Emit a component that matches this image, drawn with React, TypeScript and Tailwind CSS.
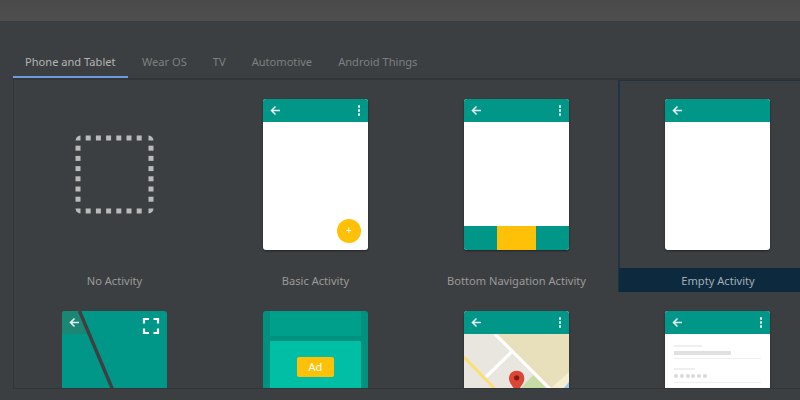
const TEAL = 'bg-[#009688]'

function Arrow({ className = '' }: { className?: string }) {
  return (
    <svg width="11" height="11" viewBox="0 0 11 11" className={className}>
      <path d="M10 5.5H2M5.5 1.5L1.5 5.5L5.5 9.5" fill="none" stroke="#e4f3f1" strokeWidth="1.6" />
    </svg>
  )
}

function Dots() {
  return (
    <div className="flex flex-col gap-[1.5px]">
      <span className="w-[2.5px] h-[2.5px] rounded-full bg-[#e8f5f3]" />
      <span className="w-[2.5px] h-[2.5px] rounded-full bg-[#e8f5f3]" />
      <span className="w-[2.5px] h-[2.5px] rounded-full bg-[#e8f5f3]" />
    </div>
  )
}

function AppBar({ dots = true }: { dots?: boolean }) {
  return (
    <div className={`h-[23px] shrink-0 ${TEAL} flex items-center justify-between pl-[7px] pr-[8px]`}>
      <Arrow />
      {dots && <Dots />}
    </div>
  )
}

function Phone({ children }: { children: React.ReactNode }) {
  return (
    <div className="w-[105px] h-[151px] rounded-[3px] overflow-hidden bg-white flex flex-col shadow-[0_1px_2px_rgba(0,0,0,0.45)]">
      {children}
    </div>
  )
}

const steps = [14.2, 24.4, 34.6, 44.8, 55, 65.2]

function NoActivity() {
  return (
    <div className="h-[151px] flex items-center justify-center">
      <svg width="81" height="81" viewBox="0 0 81 81" fill="#bababa">
        {steps.map(s => (
          <g key={s}>
            <rect x={s - 2.5} y="1.5" width="5" height="5" />
            <rect x={s - 2.5} y="74.5" width="5" height="5" />
            <rect x="1.5" y={s - 2.5} width="5" height="5" />
            <rect x="74.5" y={s - 2.5} width="5" height="5" />
          </g>
        ))}
        <path d="M1.5 6.5Q2 2 6.5 1.5V6.5Z" />
        <path d="M79.5 6.5Q79 2 74.5 1.5V6.5Z" />
        <path d="M1.5 74.5Q2 79 6.5 79.5V74.5Z" />
        <path d="M79.5 74.5Q79 79 74.5 79.5V74.5Z" />
      </svg>
    </div>
  )
}

function BasicActivity() {
  return (
    <Phone>
      <AppBar />
      <div className="flex-1 flex items-end justify-end pr-[7px] pb-[7px]">
        <div className="w-[24px] h-[24px] rounded-full bg-[#ffc107] flex items-center justify-center text-white text-[10px] leading-none font-['Liberation_Sans',sans-serif]">
          +
        </div>
      </div>
    </Phone>
  )
}

function BottomNav() {
  return (
    <Phone>
      <AppBar />
      <div className="flex-1" />
      <div className="h-[24px] flex">
        <div className={`w-[33px] ${TEAL}`} />
        <div className="w-[39px] bg-[#ffc107]" />
        <div className={`flex-1 ${TEAL}`} />
      </div>
    </Phone>
  )
}

function EmptyActivity() {
  return (
    <Phone>
      <AppBar dots={false} />
    </Phone>
  )
}

function Fullscreen() {
  return (
    <div className="relative w-[105px] h-[151px] rounded-[3px] overflow-hidden bg-[#009688]">
      <svg width="105" height="151" viewBox="0 0 105 151" className="absolute inset-0">
        <path d="M0 0H18L27.5 23H0Z" fill="#26806f" opacity="0.75" />
        <path d="M17.5 0L66 115" stroke="#3f3f41" strokeWidth="3.4" />
        <path d="M82 12.5V8H87M91.5 8H96V12.5M96 17.5V22H91.5M87 22H82V17.5" fill="none" stroke="#ffffff" strokeWidth="2.2" />
      </svg>
      <Arrow className="absolute left-[7px] top-[6px]" />
    </div>
  )
}

function AdActivity() {
  return (
    <div className="w-[105px] h-[151px] rounded-[3px] overflow-hidden bg-[#00917f] px-[7px] flex flex-col">
      <div className="h-[25px] bg-[#009f8c] shrink-0" />
      <div className="flex-1 mt-[5px] rounded-t-[1px] bg-[#00bfa5] pt-[16px] flex justify-center">
        <div className="w-[37px] h-[20px] rounded-[2px] bg-[#ffc107] text-white text-[11px] leading-[20px] text-center font-['Noto_Sans',sans-serif]">
          Ad
        </div>
      </div>
    </div>
  )
}

function MapsActivity() {
  return (
    <Phone>
      <AppBar />
      <svg width="105" height="128" viewBox="0 0 105 128">
        <rect width="105" height="128" fill="#e9e5df" />
        <path d="M31 0H105V39L86 56Z" fill="#e8dfbb" />
        <path d="M105 38L85 56H105Z" fill="#f4efd0" />
        <path d="M69.5 41L55 56H84Z" fill="#c6dba6" />
        <path d="M31 0L88 57M48 17.5L22 43" stroke="#ffffff" strokeWidth="3.2" fill="none" />
        <path d="M0 23L32 56" stroke="#fbdf74" strokeWidth="3" fill="none" />
        <path d="M105 48L98 56H105Z" fill="#a4c6ea" />
        <path d="M52.7 36.7C47 36.7 45 41 45 44.5C45 49.5 50 53 52.7 60C55.5 53 60.3 49.5 60.3 44.5C60.3 41 58.4 36.7 52.7 36.7Z" fill="#dd4637" />
        <circle cx="52.7" cy="43.8" r="2.6" fill="#7c1d14" />
      </svg>
    </Phone>
  )
}

function LoginActivity() {
  return (
    <Phone>
      <AppBar />
      <div className="px-[9px] pt-[11px] flex flex-col">
        <div className="h-[2px] w-[28px] bg-[#efefef]" />
        <div className="h-[4px] w-[57px] mt-[4px] bg-[#e0e0e0]" />
        <div className="h-[1px] mt-[3px] bg-[#efefef]" />
        <div className="h-[2px] w-[21px] mt-[9px] bg-[#efefef]" />
        <div className="flex gap-[1.8px] mt-[4px]">
          {[0, 1, 2, 3, 4, 5].map(i => (
            <span key={i} className="w-[4px] h-[4px] rounded-full bg-[#dadada]" />
          ))}
        </div>
        <div className="h-[1px] mt-[4px] bg-[#efefef]" />
      </div>
    </Phone>
  )
}

const cells = [
  { label: 'No Activity', art: <NoActivity /> },
  { label: 'Basic Activity', art: <BasicActivity /> },
  { label: 'Bottom Navigation Activity', art: <BottomNav /> },
  { label: 'Empty Activity', art: <EmptyActivity />, selected: true },
  { label: '', art: <Fullscreen /> },
  { label: '', art: <AdActivity /> },
  { label: '', art: <MapsActivity /> },
  { label: '', art: <LoginActivity /> },
]

const tabs = ['Wear OS', 'TV', 'Automotive', 'Android Things']

export default function App() {
  return (
    <div className="w-[800px] h-[400px] overflow-hidden bg-[#3c3f41] flex flex-col font-['Noto_Sans',sans-serif]">
      <div className="h-[21px] shrink-0 bg-gradient-to-b from-[#4a4a4a] to-[#4e4e4e]" />

      {/* tabs */}
      <div className="mt-[26px] ml-[13px] h-[31px] flex items-stretch text-[11.1px]">
        <div className="w-[115px] pl-[12px] pt-[7px] border-b-2 border-[#6b9be0] text-[#b4b4b4]">
          Phone and Tablet
        </div>
        <div className="flex gap-[26px] pl-[14px] pt-[7px] text-[#7d7f80]">
          {tabs.map(t => (
            <span key={t}>{t}</span>
          ))}
        </div>
      </div>

      {/* template grid */}
      <div className="ml-[13px] h-[311px] shrink-0 border-t-2 border-l border-b border-[#333537] overflow-hidden">
        <div className="w-[804px] grid grid-cols-[201px_201px_201px_201px] auto-rows-[212px]">
          {cells.map((c, i) => (
            <div
              key={i}
              className={`flex flex-col items-center pt-[19px] ${c.selected ? 'ml-px border-t-2 border-l-2 border-[#203444] -mt-px' : ''}`}
            >
              <div className={c.selected ? '-mt-px -ml-[3px]' : ''}>{c.art}</div>
              {c.label && (
                <div
                  className={`mt-auto h-[24px] w-full pt-px text-center text-[11.1px] leading-[23px] ${
                    c.selected ? 'bg-[#0d293e] text-[#a4acb3] -ml-[2px] w-[calc(100%+2px)]' : 'text-[#9a9a9a]'
                  }`}
                >
                  {c.label}
                </div>
              )}
            </div>
          ))}
        </div>
      </div>
    </div>
  )
}
